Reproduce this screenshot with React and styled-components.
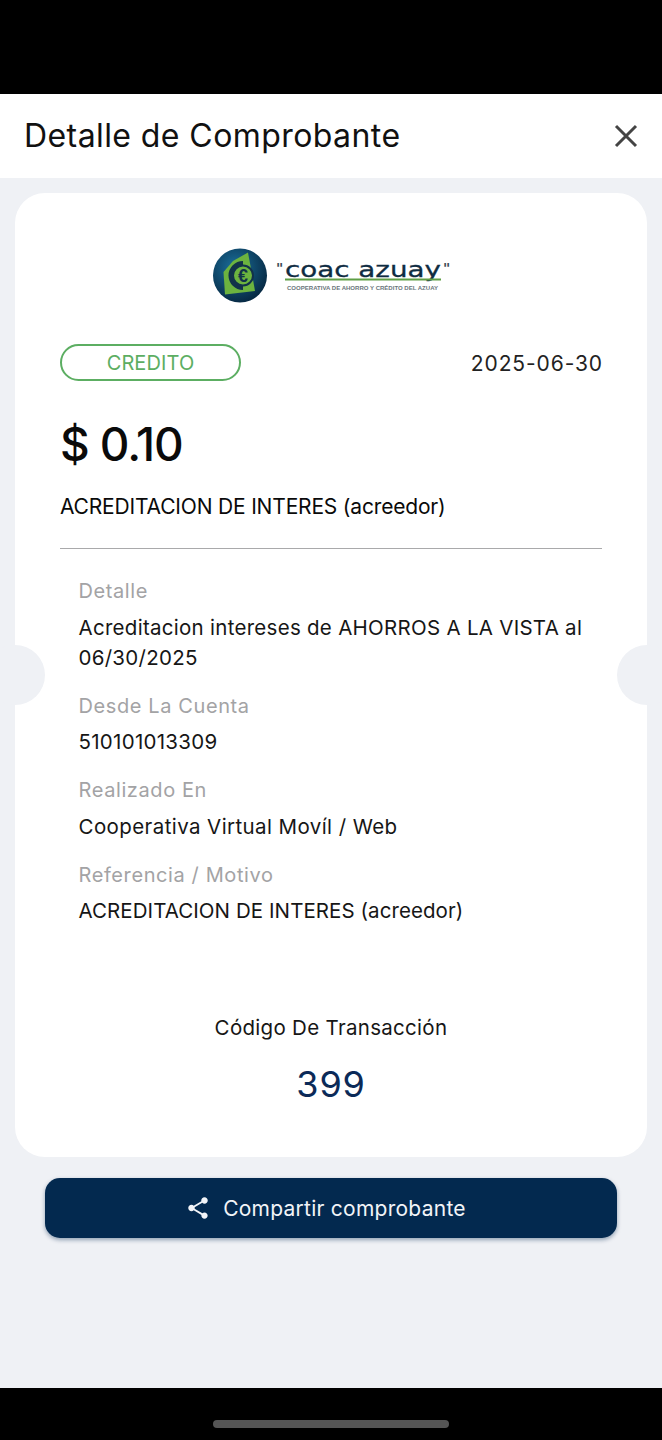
import React from 'react'
import styled, { createGlobalStyle } from 'styled-components'
import { MdShare } from 'react-icons/md'

const Global = createGlobalStyle`
  html, body { margin: 0; padding: 0; background: #000; }
  body { font-family: Inter, "Liberation Sans", sans-serif; }
`

const Screen = styled.div`
  width: 662px;
  height: 1440px;
  display: flex;
  flex-direction: column;
  background: #000;
`

const TopBar = styled.div`
  height: 94px;
  flex: none;
`

const Header = styled.header`
  height: 84px;
  flex: none;
  background: #fff;
  display: flex;
  align-items: center;
  justify-content: space-between;
  padding: 0 24px 2px;
  box-sizing: border-box;
`

const Title = styled.h1`
  margin: 0;
  font-size: 32px;
  font-weight: 400;
  letter-spacing: 0.42px;
  color: #111;
`

const CloseIcon = styled.svg`
  width: 24px;
  height: 24px;
  margin-top: 2px;
  stroke: #444;
  stroke-width: 3;
  fill: none;
`

const Body = styled.main`
  flex: 1;
  background: #eff1f5;
  padding: 15px 15px 0;
  display: flex;
  flex-direction: column;
  align-items: center;
`

const Card = styled.section`
  position: relative;
  box-sizing: border-box;
  width: 632px;
  height: 964px;
  background: #fff;
  border-radius: 30px;
  padding: 55px 45px 0;
  display: flex;
  flex-direction: column;
`

const Notch = styled.span`
  position: absolute;
  top: 452px;
  ${p => (p.$side === 'left' ? 'left: -30px;' : 'right: -30px;')}
  width: 60px;
  height: 60px;
  border-radius: 50%;
  background: #eff1f5;
`

const LogoRow = styled.div`
  display: flex;
  justify-content: center;
  height: 55px;
`

const StatusRow = styled.div`
  margin-top: 41px;
  display: flex;
  align-items: center;
  justify-content: space-between;
`

const Pill = styled.span`
  box-sizing: border-box;
  width: 181px;
  height: 37px;
  border: 2px solid #5cae62;
  border-radius: 19px;
  color: #5cae62;
  font-size: 20px;
  letter-spacing: 0.1px;
  display: flex;
  align-items: center;
  justify-content: center;
`

const DateText = styled.span`
  font-size: 21px;
  letter-spacing: 0.9px;
  margin: 1px -1px 0 0;
  color: #222;
`

const Amount = styled.div`
  margin-top: 35px;
  font-size: 46px;
  line-height: 56px;
  font-weight: 500;
  letter-spacing: -1.1px;
  color: #0a0a0a;
`

const Concept = styled.div`
  margin-top: 20px;
  font-size: 21px;
  line-height: 30px;
  letter-spacing: -0.18px;
  color: #0a0a0a;
`

const Divider = styled.hr`
  margin: 26px 0 0;
  border: 0;
  height: 1px;
  background: #a9a9ab;
`

const Details = styled.div`
  margin-top: 27px;
  padding-left: 18.5px;
  display: flex;
  flex-direction: column;
  gap: 18px;
`

const Field = styled.div`
  display: flex;
  flex-direction: column;
  gap: 6.5px;
`

const Label = styled.div`
  font-size: 20px;
  line-height: 30px;
  letter-spacing: 0.6px;
  color: #a3a3a5;
`

const Value = styled.div`
  font-size: 20.5px;
  line-height: 30px;
  letter-spacing: ${p => p.$track}px;
  color: #161616;
`

const CodeBlock = styled.div`
  margin-top: 87px;
  display: flex;
  flex-direction: column;
  align-items: center;
`

const CodeLabel = styled.div`
  font-size: 20.5px;
  line-height: 30px;
  letter-spacing: 0.3px;
  color: #161616;
`

const CodeValue = styled.div`
  margin-top: 15.5px;
  font-size: 36px;
  line-height: 50px;
  letter-spacing: 0.8px;
  color: #0b2a58;
`

const ShareButton = styled.button`
  margin-top: 21px;
  width: 572px;
  height: 60px;
  flex: none;
  border: 0;
  border-radius: 15px;
  padding: 0 11px 0 0;
  background: #03294f;
  box-shadow: 0 2px 4px rgba(3, 41, 79, 0.4);
  color: #f2f4f8;
  font: inherit;
  font-size: 21px;
  letter-spacing: 0.25px;
  display: flex;
  align-items: center;
  justify-content: center;
  gap: 12px;
`

const BottomBar = styled.div`
  height: 52px;
  flex: none;
  display: flex;
  justify-content: center;
  padding-top: 32px;
  box-sizing: border-box;
`

const HomeHandle = styled.span`
  width: 236px;
  height: 8px;
  border-radius: 4px;
  background: #555;
`

const Logo = () => (
  <svg width="237" height="55" viewBox="0 0 237 55">
    <defs>
      <radialGradient id="globe" cx="0.4" cy="0.35" r="0.7">
        <stop offset="0" stopColor="#1a6f9c" />
        <stop offset="1" stopColor="#06263f" />
      </radialGradient>
    </defs>
    <circle cx="27" cy="27.5" r="27" fill="url(#globe)" />
    <path d="M35 4.5 L39 26 L42 43 L12 46.5 L10.5 24 L20 13 Z" fill="#6cb33f" />
    <path d="M30 15 A12.5 12.5 0 1 0 30 40" fill="none" stroke="#12324a" strokeWidth="4" />
    <circle cx="30" cy="27.5" r="10" fill="none" stroke="#12324a" strokeWidth="2" />
    <text x="30" y="34" textAnchor="middle" fontFamily="Liberation Sans, sans-serif" fontSize="18" fontWeight="700" fill="#12324a">€</text>
    <text x="63" y="25" fontFamily="DejaVu Sans, sans-serif" fontSize="14" fontWeight="700" fontStyle="italic" fill="#3d4c55">"</text>
    <text x="72" y="29" fontFamily="DejaVu Sans, sans-serif" fontSize="22" stroke="#0f2c42" strokeWidth="0.3" textLength="156" lengthAdjust="spacingAndGlyphs" fill="#0f2c42">coac azuay</text>
    <text x="230" y="25" fontFamily="DejaVu Sans, sans-serif" fontSize="14" fontWeight="700" fontStyle="italic" fill="#3d4c55">"</text>
    <rect x="72" y="30.5" width="156" height="2" fill="#5f9e45" />
    <text x="74" y="42" fontFamily="Liberation Sans, sans-serif" fontSize="5.5" fontWeight="700" textLength="151" lengthAdjust="spacingAndGlyphs" fill="#6a767c">COOPERATIVA DE AHORRO Y CRÉDITO DEL AZUAY</text>
  </svg>
)

const fields = [
  { label: 'Detalle', track: 0.28, value: <>Acreditacion intereses de AHORROS A LA VISTA al<br />06/30/2025</> },
  { label: 'Desde La Cuenta', track: 0.28, value: '510101013309' },
  { label: 'Realizado En', track: 0.41, value: 'Cooperativa Virtual Movíl / Web' },
  { label: 'Referencia / Motivo', track: 0.07, value: 'ACREDITACION DE INTERES (acreedor)' },
]

export default function App() {
  return (
    <Screen>
      <Global />
      <TopBar />
      <Header>
        <Title>Detalle de Comprobante</Title>
        <CloseIcon viewBox="0 0 24 24">
          <path d="M2 2 L22 22 M22 2 L2 22" />
        </CloseIcon>
      </Header>
      <Body>
        <Card>
          <Notch $side="left" />
          <Notch $side="right" />
          <LogoRow><Logo /></LogoRow>
          <StatusRow>
            <Pill>CREDITO</Pill>
            <DateText>2025-06-30</DateText>
          </StatusRow>
          <Amount>$ 0.10</Amount>
          <Concept>ACREDITACION DE INTERES (acreedor)</Concept>
          <Divider />
          <Details>
            {fields.map(f => (
              <Field key={f.label}>
                <Label>{f.label}</Label>
                <Value $track={f.track}>{f.value}</Value>
              </Field>
            ))}
          </Details>
          <CodeBlock>
            <CodeLabel>Código De Transacción</CodeLabel>
            <CodeValue>399</CodeValue>
          </CodeBlock>
        </Card>
        <ShareButton>
          <MdShare size={26} />
          Compartir comprobante
        </ShareButton>
      </Body>
      <BottomBar><HomeHandle /></BottomBar>
    </Screen>
  )
}
